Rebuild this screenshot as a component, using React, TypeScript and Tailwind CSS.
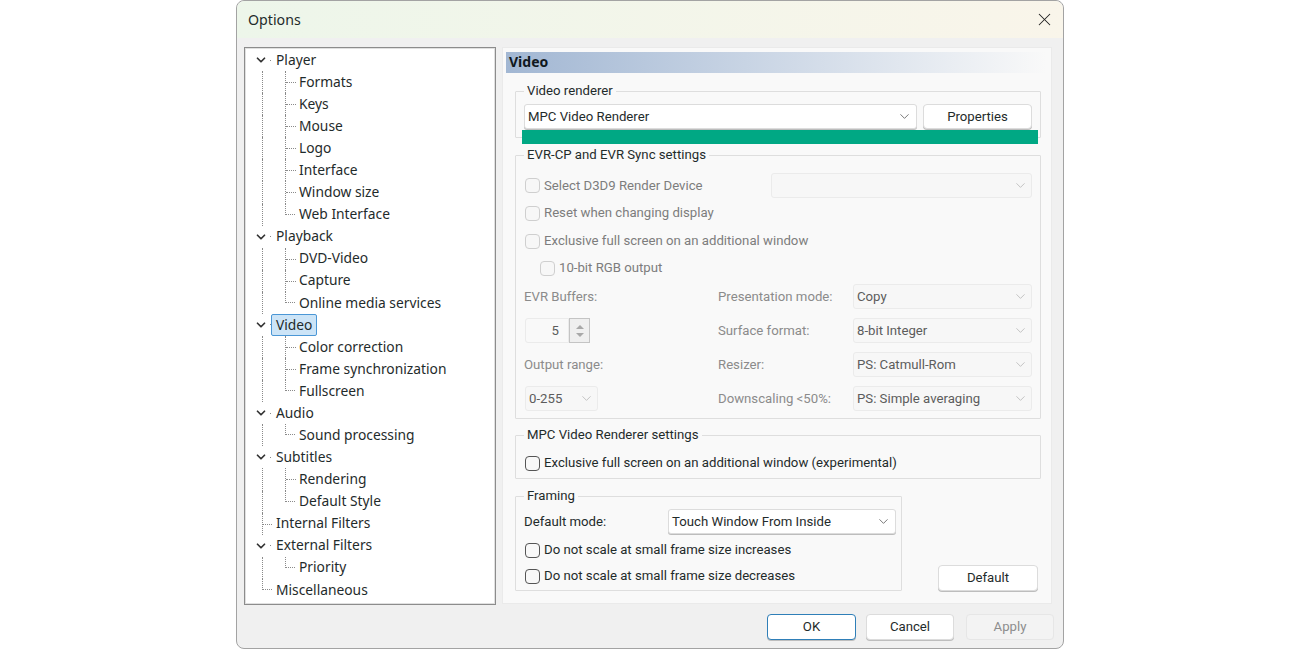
import type { ReactNode } from 'react'
import { ChevronDown, X } from 'lucide-react'

type TreeRowData = {
  label: string
  kind: 'parent' | 'child' | 'leaf'
  lastChild?: boolean
  lastRoot?: boolean
  selected?: boolean
}

const treeRows: TreeRowData[] = [
  { label: 'Player', kind: 'parent' },
  { label: 'Formats', kind: 'child' },
  { label: 'Keys', kind: 'child' },
  { label: 'Mouse', kind: 'child' },
  { label: 'Logo', kind: 'child' },
  { label: 'Interface', kind: 'child' },
  { label: 'Window size', kind: 'child' },
  { label: 'Web Interface', kind: 'child', lastChild: true },
  { label: 'Playback', kind: 'parent' },
  { label: 'DVD-Video', kind: 'child' },
  { label: 'Capture', kind: 'child' },
  { label: 'Online media services', kind: 'child', lastChild: true },
  { label: 'Video', kind: 'parent', selected: true },
  { label: 'Color correction', kind: 'child' },
  { label: 'Frame synchronization', kind: 'child' },
  { label: 'Fullscreen', kind: 'child', lastChild: true },
  { label: 'Audio', kind: 'parent' },
  { label: 'Sound processing', kind: 'child', lastChild: true },
  { label: 'Subtitles', kind: 'parent' },
  { label: 'Rendering', kind: 'child' },
  { label: 'Default Style', kind: 'child', lastChild: true },
  { label: 'Internal Filters', kind: 'leaf' },
  { label: 'External Filters', kind: 'parent' },
  { label: 'Priority', kind: 'child', lastChild: true },
  { label: 'Miscellaneous', kind: 'leaf', lastRoot: true },
]

function TreeRow({ row }: { row: TreeRowData }) {
  const text = (
    <span
      className={
        row.selected
          ? 'ml-[-5px] flex h-[22px] items-center rounded-[2px] border border-[#4b97d6] bg-[#cce4f7] px-[4px]'
          : 'whitespace-nowrap'
      }
    >
      {row.label}
    </span>
  )

  if (row.kind === 'parent') {
    return (
      <div className="flex h-[22.08px] items-center">
        <div className="flex w-[24px] items-center pl-[6px]">
          <ChevronDown size={14} strokeWidth={3} className="text-[#333]" />
          <div className="ml-[2px] h-px w-px bg-[#888]" />
        </div>
        <div className="ml-[4px]">{text}</div>
      </div>
    )
  }

  if (row.kind === 'leaf') {
    return (
      <div className="flex h-[22.08px] items-center">
        <div className="h-full w-[28px] pl-[14px]">
          {row.lastRoot ? (
            <div className="h-[11px] w-[10px] border-b border-l border-dotted border-[#8a8a8a]" />
          ) : (
            <div className="h-full border-l border-dotted border-[#8a8a8a] pt-[11px]">
              <div className="w-[9px] border-t border-dotted border-[#8a8a8a]" />
            </div>
          )}
        </div>
        {text}
      </div>
    )
  }

  return (
    <div className="flex h-[22.08px] items-center">
      <div className="h-full w-[37px] pl-[14px]">
        <div className="h-full border-l border-dotted border-[#8a8a8a]" />
      </div>
      <div className="h-full w-[14px]">
        {row.lastChild ? (
          <div className="h-[11px] w-[10px] border-b border-l border-dotted border-[#8a8a8a]" />
        ) : (
          <div className="h-full border-l border-dotted border-[#8a8a8a] pt-[11px]">
            <div className="w-[10px] border-t border-dotted border-[#8a8a8a]" />
          </div>
        )}
      </div>
      {text}
    </div>
  )
}

function Combo({ value, className, disabled }: { value?: string; className: string; disabled?: boolean }) {
  return (
    <div
      className={`flex h-[25px] items-center justify-between rounded-[3px] border pl-[3px] ${
        disabled
          ? 'border-[#ebebeb] bg-[#f7f7f7] pr-[3px] text-[#5c5c5c]'
          : 'border-[#dcdcdc] bg-white pr-[4px] shadow-[0_1px_0_#bdbdbd]'
      } ${className}`}
    >
      <span className="whitespace-nowrap">{value}</span>
      <ChevronDown size={15} strokeWidth={1.25} className={disabled ? 'text-[#b5b5b5]' : 'text-[#555]'} />
    </div>
  )
}

function Check({ label, disabled, className }: { label: string; disabled?: boolean; className?: string }) {
  return (
    <div className={`flex h-[22px] items-center gap-[4px] ${disabled ? 'text-[#7d7d7d]' : ''} ${className ?? ''}`}>
      <div
        className={`h-[15px] w-[15px] rounded-[4px] border ${
          disabled ? 'border-[#cfcfcf] bg-[#f7f7f7]' : 'border-[#555] bg-[#f8f8f8]'
        }`}
      />
      <span className="whitespace-nowrap">{label}</span>
    </div>
  )
}

function Group({ title, className, children }: { title: string; className: string; children: ReactNode }) {
  return (
    <fieldset className={`rounded-[1px] border border-[#dedede] ${className}`}>
      <legend className="ml-[8px] px-[3px] leading-[16px]">{title}</legend>
      {children}
    </fieldset>
  )
}

function Button({ label, className, focused }: { label: string; className: string; focused?: boolean }) {
  return (
    <div
      className={`flex items-center justify-center rounded-[4px] border bg-white shadow-[0_1px_0_#bdbdbd] ${
        focused ? 'border-[#2f7fb8]' : 'border-[#dcdcdc]'
      } ${className}`}
    >
      {label}
    </div>
  )
}

export default function App() {
  return (
    <div className="flex h-[650px] w-[1300px] justify-center overflow-hidden bg-white font-['Roboto',sans-serif] text-[13.2px] text-[#1f2b2b]">
      <div className="flex h-[649px] w-[828px] flex-col rounded-[8px] border border-[#a3a3a3] bg-[#f0f0f0]">
        <header className="flex h-[37px] shrink-0 items-center justify-between rounded-t-[8px] bg-gradient-to-r from-[#edf6ea] to-[#f9f5ea] pl-[11px] pr-[8px] font-['Noto_Sans',sans-serif] text-[14.2px]">
          <span>Options</span>
          <X size={21} strokeWidth={1.2} className="text-[#222]" />
        </header>

        <main className="mt-[9px] flex gap-[6px] pl-[7px]">
          <nav className="h-[558px] w-[252px] border border-[#8c8c8c] bg-white pl-[3px] pt-[1px] font-['Noto_Sans',sans-serif] text-[13.8px] shadow-[inset_0_0_0_1px_#e0e0e0]">
            {treeRows.map((row) => (
              <TreeRow key={row.label} row={row} />
            ))}
          </nav>

          <section className="h-[557px] w-[550px] border border-[#eaeaea] bg-[#f9f9f9] pl-[3px] pt-[4px]">
            <h2 className="flex h-[21px] w-[540px] items-center bg-gradient-to-r from-[#a2b7d3] to-[#f9f9f9] pb-[2px] pl-[3px] font-['Noto_Sans',sans-serif] text-[14px] font-bold text-[#101820]">
              Video
            </h2>

            <Group title="Video renderer" className="ml-[9px] mt-[10px] h-[55px] w-[526px]">
              <div className="flex gap-[6px] pl-[8px] pt-[5px]">
                <Combo value="MPC Video Renderer" className="w-[393px]" />
                <Button label="Properties" className="h-[25px] w-[109px]" />
              </div>
              <div className="relative ml-[6px] mt-px h-[14px] w-[516px] bg-[#00a884]" />
            </Group>

            <Group title="EVR-CP and EVR Sync settings" className="ml-[9px] mt-[9px] h-[272px] w-[526px]">
              <div className="mt-[10px] flex h-[25px] items-center justify-between pl-[9px] pr-[8px]">
                <Check label="Select D3D9 Render Device" disabled />
                <Combo className="w-[261px]" disabled />
              </div>
              <Check label="Reset when changing display" disabled className="ml-[9px] mt-[4px]" />
              <Check label="Exclusive full screen on an additional window" disabled className="ml-[9px] mt-[6px]" />
              <Check label="10-bit RGB output" disabled className="ml-[24px] mt-[5px]" />

              <div className="mt-[5px] grid grid-cols-[194px_135px_179px] gap-y-[9px] pl-[8px] text-[#8b8b8b]">
                <div className="flex h-[25px] items-center">EVR Buffers:</div>
                <div className="flex h-[25px] items-center">Presentation mode:</div>
                <Combo value="Copy" className="w-[179px]" disabled />

                <div className="flex h-[25px] items-start pl-px">
                  <div className="flex h-[25px] w-[44px] items-center justify-end rounded-l-[3px] border border-[#ebebeb] pr-[9px] text-[#5c5c5c]">
                    5
                  </div>
                  <div className="flex h-[25px] w-[21px] flex-col items-center justify-center gap-[4px] border border-[#c4c4c4] bg-[#efefef]">
                    <div className="h-0 w-0 border-x-[4px] border-b-[4px] border-x-transparent border-b-[#a8a8a8]" />
                    <div className="h-0 w-0 border-x-[4px] border-t-[4px] border-x-transparent border-t-[#a8a8a8]" />
                  </div>
                </div>
                <div className="flex h-[25px] items-center">Surface format:</div>
                <Combo value="8-bit Integer" className="w-[179px]" disabled />

                <div className="flex h-[25px] items-center">Output range:</div>
                <div className="flex h-[25px] items-center">Resizer:</div>
                <Combo value="PS: Catmull-Rom" className="w-[179px]" disabled />

                <div className="pl-px">
                  <Combo value="0-255" className="w-[73px]" disabled />
                </div>
                <div className="flex h-[25px] items-center">Downscaling &lt;50%:</div>
                <Combo value="PS: Simple averaging" className="w-[179px]" disabled />
              </div>
            </Group>

            <Group title="MPC Video Renderer settings" className="ml-[9px] mt-[8px] h-[52px] w-[526px]">
              <Check label="Exclusive full screen on an additional window (experimental)" className="ml-[9px] mt-[9px]" />
            </Group>

            <div className="ml-[9px] mt-[9px] flex items-end">
              <Group title="Framing" className="h-[103px] w-[387px]">
                <div className="mt-[5px] flex items-center pl-[8px]">
                  <span className="w-[144px]">Default mode:</span>
                  <Combo value="Touch Window From Inside" className="w-[228px]" />
                </div>
                <Check label="Do not scale at small frame size increases" className="ml-[9px] mt-[5px]" />
                <Check label="Do not scale at small frame size decreases" className="ml-[9px] mt-[4px]" />
              </Group>
              <Button label="Default" className="ml-[36px] h-[26px] w-[100px]" />
            </div>
          </section>
        </main>

        <footer className="mt-[9px] flex justify-end gap-[10px] pr-[9px]">
          <Button label="OK" focused className="h-[26px] w-[89px]" />
          <Button label="Cancel" className="h-[26px] w-[88px]" />
          <div className="ml-[2px] flex h-[26px] w-[88px] items-center justify-center rounded-[4px] border border-[#e6e6e6] bg-[#f3f3f3] text-[#8d8d8d]">
            Apply
          </div>
        </footer>
      </div>
    </div>
  )
}
